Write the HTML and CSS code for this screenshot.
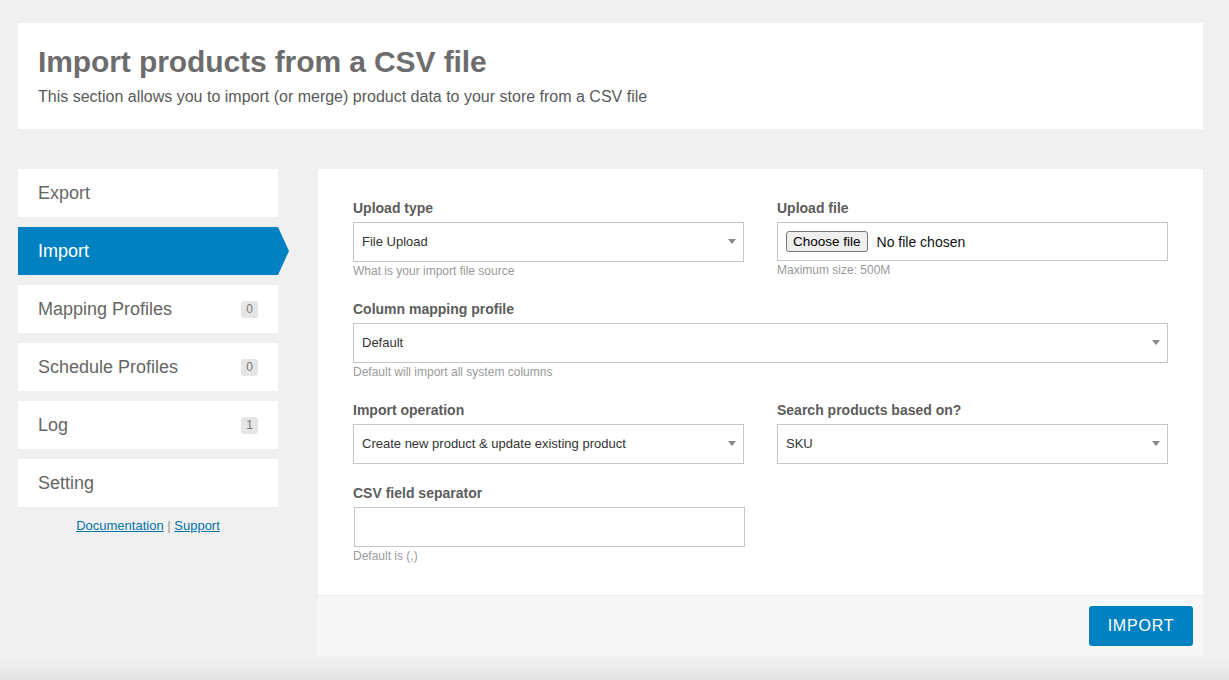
FILE: index.html
```html
<!DOCTYPE html>
<html lang="en">
<head>
<meta charset="utf-8">
<title>Import products from a CSV file</title>
<link rel="stylesheet" href="styles.css">
</head>
<body>
<div class="page">
  <header class="intro">
    <h1 class="intro-title">Import products from a CSV file</h1>
    <p class="intro-text">This section allows you to import (or merge) product data to your store from a CSV file</p>
  </header>

  <div class="layout">
    <aside class="sidebar">
      <nav class="nav">
        <a class="nav-item">Export</a>
        <a class="nav-item nav-item-active">Import</a>
        <a class="nav-item">Mapping Profiles <span class="badge">0</span></a>
        <a class="nav-item">Schedule Profiles <span class="badge">0</span></a>
        <a class="nav-item">Log <span class="badge">1</span></a>
        <a class="nav-item">Setting</a>
      </nav>
      <div class="side-links">
        <a class="side-link" href="#">Documentation</a> <span class="sep">|</span> <a class="side-link" href="#">Support</a>
      </div>
    </aside>

    <main class="panel">
      <div class="form">
        <div class="field">
          <div class="label">Upload type</div>
          <div class="select"><span>File Upload</span><span class="caret"></span></div>
          <div class="help">What is your import file source</div>
        </div>
        <div class="field">
          <div class="label">Upload file</div>
          <div class="file-box"><span class="file-btn">Choose file</span><span class="file-name">No file chosen</span></div>
          <div class="help">Maximum size: 500M</div>
        </div>
        <div class="field field-wide">
          <div class="label">Column mapping profile</div>
          <div class="select"><span>Default</span><span class="caret"></span></div>
          <div class="help">Default will import all system columns</div>
        </div>
        <div class="field">
          <div class="label">Import operation</div>
          <div class="select"><span>Create new product &amp; update existing product</span><span class="caret"></span></div>
        </div>
        <div class="field">
          <div class="label">Search products based on?</div>
          <div class="select"><span>SKU</span><span class="caret"></span></div>
        </div>
        <div class="field field-last">
          <div class="label">CSV field separator</div>
          <div class="text-input"></div>
          <div class="help">Default is (,)</div>
        </div>
      </div>
      <div class="panel-footer">
        <button class="btn-import" type="button">IMPORT</button>
      </div>
    </main>
  </div>
</div>
</body>
</html>
```

FILE: styles.css
```css
* { box-sizing: border-box; }

html {
  background: linear-gradient(to bottom, #f0f0f0 0, #f0f0f0 660px, #e2e2e2 680px);
  min-height: 100%;
}

body {
  margin: 0;
  font-family: "Liberation Sans", Arial, Helvetica, sans-serif;
  color: #555;
}

.page {
  padding: 23px 26px 0 18px;
}

.intro {
  background: #fff;
  padding: 21px 20px 22px;
}

.intro-title {
  margin: 0;
  font-size: 30px;
  line-height: 36px;
  font-weight: 700;
  color: #6d6d6d;
  letter-spacing: -0.1px;
}

.intro-text {
  margin: 7px 0 0;
  font-size: 16px;
  line-height: 20px;
  color: #5a5a5a;
}

.layout {
  display: flex;
  gap: 40px;
  margin-top: 40px;
  align-items: flex-start;
}

.sidebar {
  width: 260px;
  flex: 0 0 260px;
}

.nav {
  display: flex;
  flex-direction: column;
  gap: 10px;
}

.nav-item {
  position: relative;
  display: flex;
  align-items: center;
  justify-content: space-between;
  height: 48px;
  padding: 0 20px;
  background: #fff;
  font-size: 18px;
  color: #666;
}

.nav-item-active {
  background: #0081c2;
  color: #fff;
}

.nav-item-active::after {
  content: "";
  position: absolute;
  top: 0;
  right: -11px;
  width: 0;
  height: 0;
  border-top: 24px solid transparent;
  border-bottom: 24px solid transparent;
  border-left: 11px solid #0081c2;
}

.badge {
  display: inline-flex;
  align-items: center;
  justify-content: center;
  width: 17px;
  height: 17px;
  border-radius: 3px;
  background: #e5e5e5;
  color: #777;
  font-size: 12px;
}

.side-links {
  margin-top: 11px;
  text-align: center;
  font-size: 13px;
  line-height: 16px;
}

.side-link {
  color: #0073aa;
  text-decoration: underline;
}

.sep { color: #999; }

.panel {
  flex: 1;
  background: #fff;
}

.form {
  display: grid;
  grid-template-columns: 1fr 1fr;
  column-gap: 33px;
  padding: 29px 35px 11px;
}

.field {
  padding-bottom: 19px;
}

.field-wide {
  grid-column: 1 / span 2;
}

.label {
  font-size: 14px;
  line-height: 20px;
  font-weight: 700;
  color: #5c5c5c;
  margin-bottom: 4px;
}

.select {
  display: flex;
  align-items: center;
  justify-content: space-between;
  height: 40px;
  padding: 0 7px 1px 8px;
  border: 1px solid #c6c6c6;
  font-size: 13px;
  color: #333;
}

.caret {
  width: 0;
  height: 0;
  border-left: 4px solid transparent;
  border-right: 4px solid transparent;
  border-top: 5px solid #888;
}

.file-box {
  display: flex;
  align-items: center;
  height: 39px;
  padding: 0 8px;
  border: 1px solid #c6c6c6;
  font-size: 14px;
  color: #111;
}

.file-btn {
  display: inline-block;
  height: 21px;
  line-height: 19px;
  padding: 0 6px;
  background: #efefef;
  border: 1px solid #767676;
  border-radius: 3px;
  color: #000;
  font-size: 13.5px;
  margin-right: 9px;
}

.file-name { color: #111; }

.text-input {
  height: 40px;
  margin-left: 1px;
  margin-right: -1px;
  border: 1px solid #c6c6c6;
}

.help {
  font-size: 12px;
  line-height: 18px;
  color: #999;
}

.panel-footer {
  display: flex;
  justify-content: flex-end;
  padding: 10px;
  background: #f7f7f7;
  border-top: 1px solid #ebebeb;
}

.btn-import {
  width: 104px;
  height: 40px;
  border: 0;
  border-radius: 3px;
  background: #0081c2;
  color: #fff;
  font-family: "Liberation Sans", Arial, sans-serif;
  font-size: 16px;
  letter-spacing: 0.8px;
  padding: 0;
}
```
